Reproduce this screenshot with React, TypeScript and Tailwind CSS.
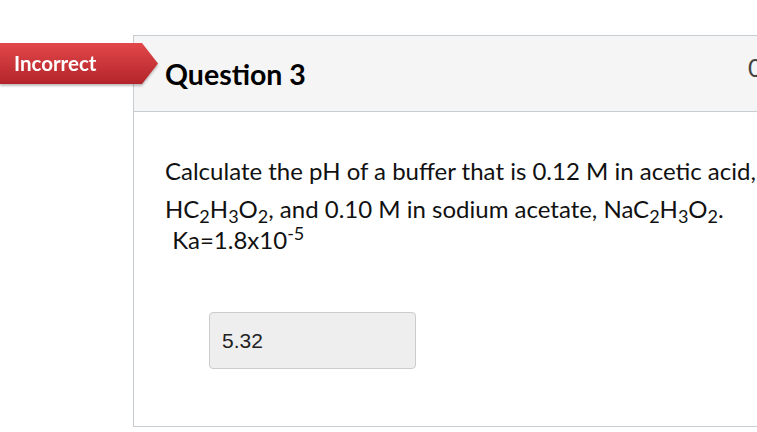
import React from "react";

export default function App() {
  return (
    <div className="relative w-[757px] h-[432px] overflow-hidden bg-white font-['Lato','Noto_Sans',sans-serif] text-[#2d3b45]">
      <div className="pt-[35px] pl-[133px]">
        <div className="w-[720px] border border-r-0 border-[#c7cdd1]">
          <div className="flex h-[76px] items-center justify-between border-b border-[#c7cdd1] bg-[#f5f5f5] pl-[31px]">
            <h2 className="text-[28.5px] font-bold leading-[34px] text-black">Question 3</h2>
            <span className="mb-[13px] w-[105px] shrink-0 whitespace-nowrap text-[25px] leading-[30px] text-[#444]">0 / 1 pts</span>
          </div>
          <div className="h-[314px] pl-[31px] pt-[42px]">
            <div className="text-[24px] leading-[33px] text-[#111]">
              <div>Calculate the pH of a buffer that is 0.12 M in acetic acid,</div>
              <div className="mt-[5px]">
                HC<sub>2</sub>H<sub>3</sub>O<sub>2</sub>, and 0.10 M in sodium acetate, NaC<sub>2</sub>H<sub>3</sub>O<sub>2</sub>.
              </div>
              <div className="-mt-[2px] pl-[1px]">
                {"\u00a0"}Ka=1.8x10<sup>-5</sup>
              </div>
            </div>
            <div className="ml-[44px] mt-[56px] flex h-[57px] w-[207px] items-center rounded-[4px] border border-[#cccccc] bg-[#eeeeee] pl-[12px] font-['Liberation_Sans',Arial,sans-serif] text-[21px] text-[#222]">
              5.32
            </div>
          </div>
        </div>
      </div>
      <div className="absolute left-0 top-[43px] h-[41px] w-[158px] drop-shadow-[0_2px_1px_rgba(0,0,0,0.25)]">
        <div className="h-full w-full bg-gradient-to-b from-[#e2474a] to-[#b3242a] [clip-path:polygon(0_0,142px_0,158px_50%,142px_100%,0_100%)] pl-[14px] text-[20.5px] font-bold leading-[40px] text-white">
          Incorrect
        </div>
      </div>
    </div>
  );
}
